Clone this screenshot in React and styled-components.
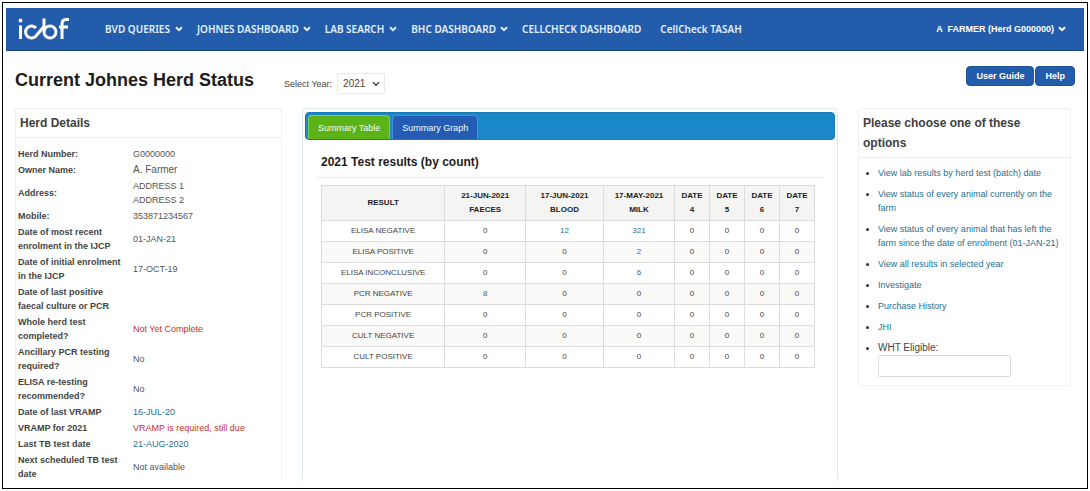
import React from "react";
import styled, { createGlobalStyle } from "styled-components";

const sans = `"Liberation Sans", Arial, sans-serif`;

const GlobalStyle = createGlobalStyle`
  * { box-sizing: border-box; }
  body {
    margin: 0;
    padding: 2px;
    background: #fff;
    color: #444;
    font: 9px/14px ${sans};
  }
  #root { display: flex; flex-direction: column; min-height: calc(100vh - 4px); }
  button, input, select { font-family: inherit; }
`;

const Page = styled.div`
  flex: 1;
  border: 1px solid #000;
`;

const Header = styled.header`
  display: flex;
  align-items: center;
  height: 43px;
  margin: 5px 3px 0;
  padding: 0 18px 0 12px;
  background: #245cac;
  border-bottom: 1px solid #1a4687;
`;

const Logo = styled.svg`
  display: block;
  width: 52px;
  height: 26px;
  margin-right: 35px;
`;

const Nav = styled.nav`
  display: flex;
  flex: 1;
  gap: 14px;
`;

const NavLink = styled.a`
  display: flex;
  align-items: center;
  gap: ${(p) => (p.$tight ? 4 : 5)}px;
  margin-right: ${(p) => (p.$plain ? 5 : 0)}px;
  color: #e2f0ff;
  font: 600 10px/14px "Noto Sans", sans-serif;
  text-decoration: none;
  white-space: nowrap;
`;

const Account = styled.button`
  display: flex;
  align-items: center;
  gap: 4px;
  padding: 0;
  border: 0;
  background: none;
  color: #fff;
  font-size: 9px;
  font-weight: bold;
  line-height: 14px;
  white-space: pre;
`;

const Chevron = styled.svg`
  width: 8px;
  height: 6px;
  fill: none;
  stroke: currentColor;
  stroke-width: 2;
`;

const TitleBar = styled.div`
  display: flex;
  align-items: flex-start;
  padding: 15px 12px 0;
`;

const Title = styled.h1`
  margin: 3px 30px 0 0;
  color: #1c1c1c;
  font-size: 18px;
  line-height: 22px;
`;

const YearField = styled.div`
  display: flex;
  align-items: center;
  gap: 5px;
  margin-top: 7px;
  flex: 1;
`;

const SelectWrap = styled.div`
  position: relative;
  color: #444;
`;

const YearSelect = styled.select`
  appearance: none;
  width: 48px;
  height: 21px;
  padding: 0 5px;
  border: 1px solid #e9e9e9;
  border-radius: 2px;
  background: #fff;
  color: #444;
  font-size: 10px;
`;

const SelectChevron = styled(Chevron)`
  position: absolute;
  top: 8px;
  right: 5px;
  stroke-width: 1.5;
  pointer-events: none;
`;

const Actions = styled.div`
  display: flex;
  gap: 1px;
`;

const ActionButton = styled.button`
  height: 20px;
  padding: 0 9px;
  border: 1px solid #1d5299;
  border-radius: 4px;
  background: #245cac;
  color: #fff;
  font-size: 9px;
  font-weight: bold;
`;

const Columns = styled.main`
  display: grid;
  grid-template-columns: 267fr 536fr 213fr;
  align-items: start;
  gap: 20px;
  padding: 14px 16px 5px 12px;
`;

const Panel = styled.section`
  border: 1px solid #efefef;
  border-bottom-width: ${(p) => (p.$open ? 0 : 1)}px;
  border-radius: 3px;
`;

const PanelTitle = styled.h2`
  margin: 0;
  padding: 4px;
  border-bottom: 1px solid #ececec;
  color: #404040;
  font-size: 12px;
  line-height: 20px;
`;

const Details = styled.table`
  width: 100%;
  margin: 8px 0 0;
  border-collapse: collapse;
  th, td {
    padding: 1px 0 1px 2px;
    text-align: left;
    vertical-align: middle;
  }
  th { width: 115px; padding-right: 8px; color: #444; }
`;

const Value = styled.td`
  color: ${(p) => (p.$tone === "alert" ? "#c8302c" : "#555")};
  font-size: ${(p) => (p.$large ? 10 : 9)}px;
  a { color: #1d6f93; text-decoration: none; }
`;

const Results = styled.section`
  align-self: stretch;
  border: 1px solid #dcebea;
  border-bottom: 0;
  border-radius: 4px;
  padding: 3px 2px 20px;
`;

const TabBar = styled.div`
  display: flex;
  align-items: flex-end;
  gap: 2px;
  height: 28px;
  padding: 0 2px;
  border: 1px solid #1779b5;
  border-radius: 4px;
  background: #1a88c6;
`;

const Tab = styled.button`
  height: 24px;
  padding: 0 9px;
  border: 1px solid ${(p) => (p.$active ? "#7fcf50" : "#4f8ed8")};
  border-bottom: 0;
  border-radius: 4px 4px 0 0;
  background: ${(p) => (p.$active ? "#5bb318" : "#245cb4")};
  color: #f2fbff;
  font-size: 9px;
`;

const ResultsTitle = styled.h2`
  margin: 12px 12px 7px;
  padding: 0 4px 5px;
  border-bottom: 1px solid #e9e9e9;
  color: #1c1c1c;
  font-size: 12px;
  line-height: 20px;
`;

const Counts = styled.table`
  width: calc(100% - 36px);
  margin: 0 20px 0 16px;
  border-collapse: collapse;
  table-layout: fixed;
  font-size: 8px;
  text-align: center;
  th, td { padding: 0; border: 1px solid #dcdcdc; }
  th { height: 35px; background: #f4f4f3; color: #1c1c1c; }
  td { height: 21px; color: #444; }
  tbody tr:nth-child(even) { background: #f9faf7; }
  a { color: #2a6c9c; text-decoration: none; }
`;

const Options = styled.ul`
  display: flex;
  flex-direction: column;
  gap: 7px;
  margin: 0;
  padding: 8px 4px 8px 19px;
  color: #333;
  a { color: #1d6f93; text-decoration: none; }
`;

const WhtField = styled.label`
  color: #444;
  font-size: 10px;
`;

const WhtInput = styled.input`
  display: block;
  width: 133px;
  height: 22px;
  border: 1px solid #dcdcdc;
  border-radius: 2px;
  background: #fff;
`;

const Down = ({ as: C = Chevron, ...props }) => (
  <C viewBox="0 0 8 6" aria-hidden="true" {...props}>
    <path d="M1 1.2 4 4.2 7 1.2" />
  </C>
);

const nav = [
  { text: "BVD QUERIES", menu: true },
  { text: "JOHNES DASHBOARD", menu: true, tight: true },
  { text: "LAB SEARCH", menu: true },
  { text: "BHC DASHBOARD", menu: true, tight: true },
  { text: "CELLCHECK DASHBOARD" },
  { text: "CellCheck TASAH" },
];

const details = [
  { label: "Herd Number:", value: "G0000000" },
  { label: "Owner Name:", value: "A. Farmer", large: true },
  { label: "Address:", value: <>ADDRESS 1<br />ADDRESS 2</> },
  { label: "Mobile:", value: "353871234567" },
  { label: "Date of most recent enrolment in the IJCP", value: "01-JAN-21" },
  { label: "Date of initial enrolment in the IJCP", value: "17-OCT-19" },
  { label: "Date of last positive faecal culture or PCR", value: "" },
  { label: "Whole herd test completed?", value: "Not Yet Complete", tone: "alert" },
  { label: "Ancillary PCR testing required?", value: "No" },
  { label: "ELISA re-testing recommended?", value: "No" },
  { label: "Date of last VRAMP", value: <a href="#vramp">16-JUL-20</a> },
  { label: "VRAMP for 2021", value: "VRAMP is required, still due", tone: "alert" },
  { label: "Last TB test date", value: <a href="#tb">21-AUG-2020</a> },
  { label: "Next scheduled TB test date", value: "Not available" },
];

const columns = [
  ["21-JUN-2021", "FAECES"],
  ["17-JUN-2021", "BLOOD"],
  ["17-MAY-2021", "MILK"],
  ["DATE", "4"],
  ["DATE", "5"],
  ["DATE", "6"],
  ["DATE", "7"],
];
const widths = [25, 16.4, 15.8, 14.4, 7.1, 7.1, 7.1, 7.1];

const counts = [
  ["ELISA NEGATIVE", 0, 12, 321, 0, 0, 0, 0],
  ["ELISA POSITIVE", 0, 0, 2, 0, 0, 0, 0],
  ["ELISA INCONCLUSIVE", 0, 0, 6, 0, 0, 0, 0],
  ["PCR NEGATIVE", 8, 0, 0, 0, 0, 0, 0],
  ["PCR POSITIVE", 0, 0, 0, 0, 0, 0, 0],
  ["CULT NEGATIVE", 0, 0, 0, 0, 0, 0, 0],
  ["CULT POSITIVE", 0, 0, 0, 0, 0, 0, 0],
];

const options = [
  "View lab results by herd test (batch) date",
  "View status of every animal currently on the farm",
  "View status of every animal that has left the farm since the date of enrolment (01-JAN-21)",
  "View all results in selected year",
  "Investigate",
  "Purchase History",
  "JHI",
];

export default function App() {
  return (
    <>
      <GlobalStyle />
      <Page>
        <Header>
          <Logo viewBox="0 0 52 26" role="img" aria-label="icbf" fill="none" stroke="#fff" strokeWidth="3" strokeLinejoin="round">
            <path d="M2.500 9.500V23" />
            <circle cx="2.500" cy="4.500" r="1.900" fill="#fff" stroke="none" />
            <path d="M18 12A6 6 0 1 0 17.500 20.500L26 10.500V2.500" />
            <circle cx="32" cy="16" r="6" />
            <path d="M44 23V8Q44 3.500 48 3.500H51M41 11H50" />
          </Logo>
          <Nav>
            {nav.map((n) => (
              <NavLink key={n.text} href="#menu" $tight={n.tight} $plain={!n.menu}>
                {n.text}
                {n.menu && <Down />}
              </NavLink>
            ))}
          </Nav>
          <Account type="button">
            {"A  FARMER (Herd G000000)"}
            <Down />
          </Account>
        </Header>

        <TitleBar>
          <Title>Current Johnes Herd Status</Title>
          <YearField>
            <label htmlFor="year">Select Year:</label>
            <SelectWrap>
              <YearSelect id="year" defaultValue="2021">
                <option>2021</option>
              </YearSelect>
              <Down as={SelectChevron} />
            </SelectWrap>
          </YearField>
          <Actions>
            <ActionButton type="button">User Guide</ActionButton>
            <ActionButton type="button">Help</ActionButton>
          </Actions>
        </TitleBar>

        <Columns>
          <Panel $open>
            <PanelTitle>Herd Details</PanelTitle>
            <Details>
              <tbody>
                {details.map((d) => (
                  <tr key={d.label}>
                    <th scope="row">{d.label}</th>
                    <Value $tone={d.tone} $large={d.large}>{d.value}</Value>
                  </tr>
                ))}
              </tbody>
            </Details>
          </Panel>

          <Results>
            <TabBar role="tablist">
              <Tab type="button" role="tab" aria-selected="true" $active>Summary Table</Tab>
              <Tab type="button" role="tab" aria-selected="false">Summary Graph</Tab>
            </TabBar>
            <ResultsTitle>2021 Test results (by count)</ResultsTitle>
            <Counts>
              <colgroup>
                {widths.map((w, i) => <col key={i} width={`${w}%`} />)}
              </colgroup>
              <thead>
                <tr>
                  <th scope="col">RESULT</th>
                  {columns.map(([a, b]) => (
                    <th scope="col" key={a + b}>{a}<br />{b}</th>
                  ))}
                </tr>
              </thead>
              <tbody>
                {counts.map(([name, ...cells]) => (
                  <tr key={name}>
                    <td>{name}</td>
                    {cells.map((c, i) => (
                      <td key={i}>{c ? <a href="#result">{c}</a> : c}</td>
                    ))}
                  </tr>
                ))}
              </tbody>
            </Counts>
          </Results>

          <Panel>
            <PanelTitle>Please choose one of these options</PanelTitle>
            <Options>
              {options.map((o) => (
                <li key={o}><a href="#option">{o}</a></li>
              ))}
              <li>
                <WhtField htmlFor="wht">WHT Eligible:</WhtField>
                <WhtInput id="wht" type="text" />
              </li>
            </Options>
          </Panel>
        </Columns>
      </Page>
    </>
  );
}
